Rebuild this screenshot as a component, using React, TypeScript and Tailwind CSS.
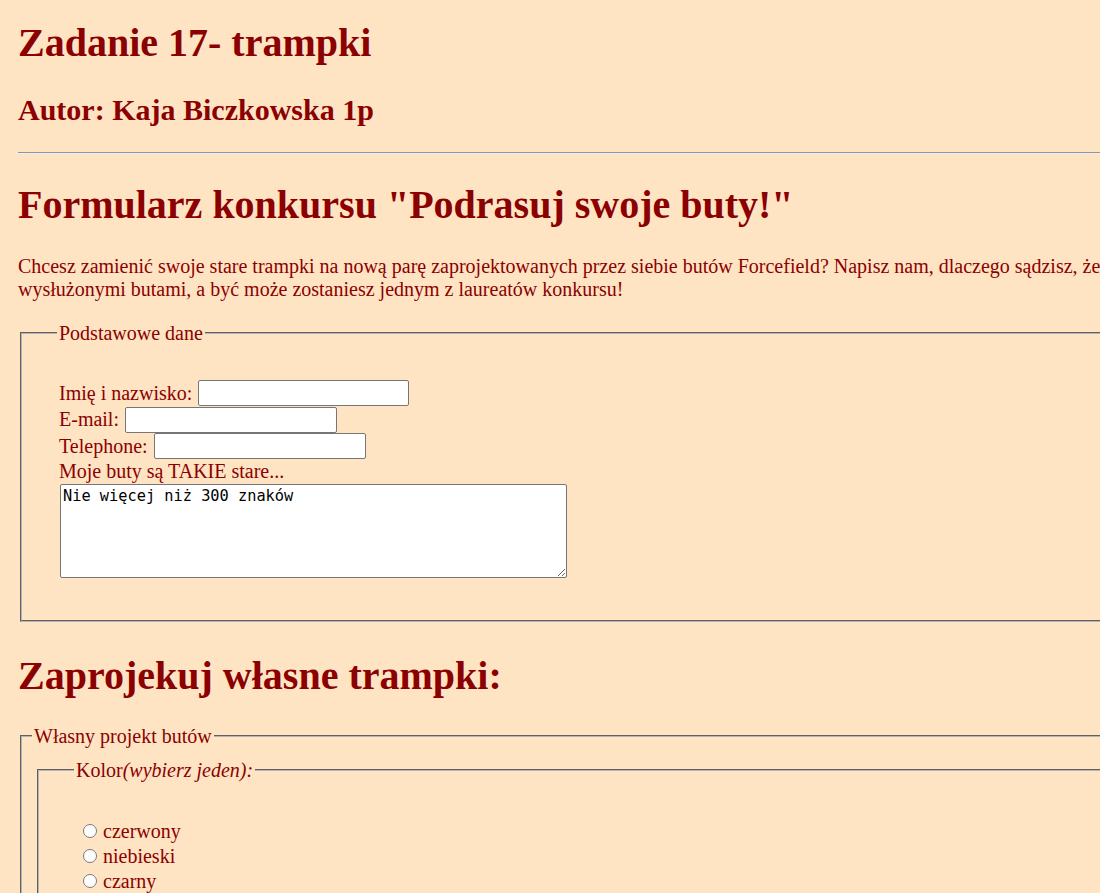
export default function App() {
  const rows = [
    { label: "Imię i nazwisko:", w: "w-[211px]" },
    { label: "E-mail:", w: "w-[212px]" },
    { label: "Telephone:", w: "w-[212px]" },
  ];
  const colors = ["czerwony", "niebieski", "czarny"];

  return (
    <div className="w-[1100px] h-[893px] overflow-hidden bg-[#ffe4c4] font-['Liberation_Serif',serif] text-[#8b0000] text-[20px] leading-[23px]">
      <div className="w-[1400px] pl-[18px] pt-[20px]">
        <h1 className="text-[40px] leading-[46px] font-bold">Zadanie 17- trampki</h1>
        <h2 className="mt-[26px] text-[30px] leading-[35px] font-bold">Autor: Kaja Biczkowska 1p</h2>
        <hr className="mt-[25px] h-0 border-t border-b border-t-[#8f959b] border-b-[#eeeeee]" />

        <h1 className="mt-[28px] text-[40px] leading-[46px] font-bold">
          Formularz konkursu "Podrasuj swoje buty!"
        </h1>
        <p className="mt-[27px] whitespace-nowrap">
          Chcesz zamienić swoje stare trampki na nową parę zaprojektowanych przez siebie butów Forcefield? Napisz nam, dlaczego sądzisz, że powinieneś rozstać się ze swoimi
          <br />
          wysłużonymi butami, a być może zostaniesz jednym z laureatów konkursu!
        </p>

        <fieldset className="mt-[19px] ml-[2px] border-2 [border-style:groove] border-[#b4b4b4] pl-[35px] pb-[42px]">
          <legend className="px-[2px] pt-[2px]">Podstawowe dane</legend>
          <div className="pl-[2px] pt-[35px]">
            {rows.map((r) => (
              <div key={r.label} className="flex items-center gap-[6px] h-[26.5px]">
                <span>{r.label}</span>
                <input type="text" className={`${r.w} h-[26px] bg-white border border-[#767676] rounded-[2px]`} />
              </div>
            ))}
            <div className="h-[24px] flex items-center">Moje buty są TAKIE stare...</div>
            <textarea
              defaultValue="Nie więcej niż 300 znaków"
              className="block ml-[1px] w-[507px] h-[94px] bg-white border border-[#767676] rounded-[2px] p-[2px] font-['DejaVu_Sans_Mono',monospace] text-[15.3px] leading-[18px] text-black"
            />
          </div>
        </fieldset>

        <h1 className="mt-[31px] text-[40px] leading-[46px] font-bold">Zaprojekuj własne trampki:</h1>

        <fieldset className="mt-[26px] ml-[2px] border-2 [border-style:groove] border-[#b4b4b4] pl-[10px] pb-[20px]">
          <legend className="px-[2px]">Własny projekt butów</legend>
          <fieldset className="mt-[11px] ml-[5px] border-2 [border-style:groove] border-[#b4b4b4] pl-[35px] pb-[20px]">
            <legend className="px-[2px]">
              Kolor<i>(wybierz jeden):</i>
            </legend>
            <div className="pt-[37px] pl-[9px]">
              {colors.map((c) => (
                <label key={c} className="flex items-center h-[25px]">
                  <input type="radio" name="kolor" className="w-[14px] h-[14px] m-0 mr-[6px]" />
                  {c}
                </label>
              ))}
            </div>
          </fieldset>
        </fieldset>
      </div>
    </div>
  );
}
